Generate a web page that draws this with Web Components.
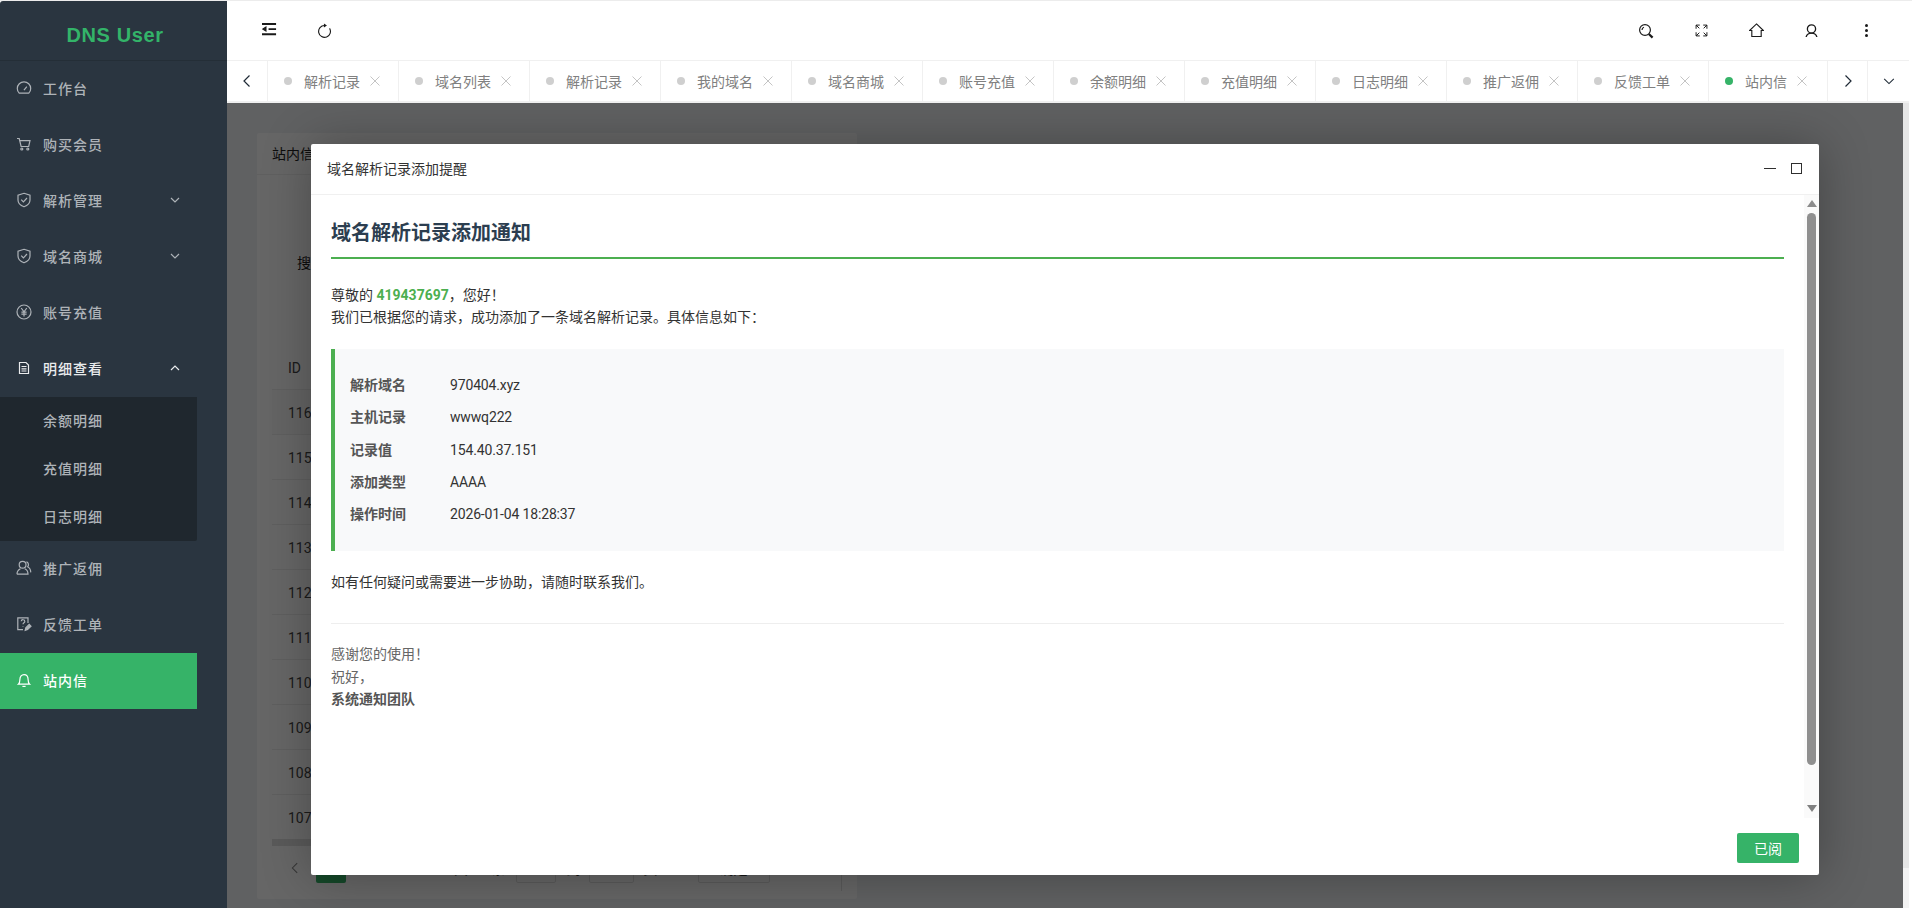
<!doctype html>
<html lang="zh">
<head>
<meta charset="utf-8">
<title>DNS User</title>
<style>
  html, body { margin: 0; height: 100%; background: #fff; overflow: hidden; }
  body { font: 14px Roboto, "Noto Sans CJK SC", sans-serif; color: #333; }
</style>
</head>
<body>
<dns-app>
  <dns-sidebar slot="side" logo="DNS User">
    <side-item icon="gauge" label="工作台"></side-item>
    <side-item icon="cart" label="购买会员"></side-item>
    <side-item icon="shield" label="解析管理" caret="down"></side-item>
    <side-item icon="shield" label="域名商城" caret="down"></side-item>
    <side-item icon="yen" label="账号充值"></side-item>
    <side-item icon="doc" label="明细查看" caret="up" open></side-item>
    <side-group>
      <side-item sub label="余额明细"></side-item>
      <side-item sub label="充值明细"></side-item>
      <side-item sub label="日志明细"></side-item>
    </side-group>
    <side-item icon="users" label="推广返佣"></side-item>
    <side-item icon="ticket" label="反馈工单"></side-item>
    <side-item icon="bell" label="站内信" active></side-item>
  </dns-sidebar>
  <top-bar slot="top"></top-bar>
  <tab-strip slot="top">
    <tab-item label="解析记录"></tab-item>
    <tab-item label="域名列表"></tab-item>
    <tab-item label="解析记录"></tab-item>
    <tab-item label="我的域名"></tab-item>
    <tab-item label="域名商城"></tab-item>
    <tab-item label="账号充值"></tab-item>
    <tab-item label="余额明细"></tab-item>
    <tab-item label="充值明细"></tab-item>
    <tab-item label="日志明细"></tab-item>
    <tab-item label="推广返佣"></tab-item>
    <tab-item label="反馈工单"></tab-item>
    <tab-item label="站内信" active></tab-item>
  </tab-strip>
  <inbox-card></inbox-card>
  <modal-dialog slot="modal" heading="域名解析记录添加提醒" action="已阅">
    <notice-mail></notice-mail>
  </modal-dialog>
</dns-app>

<script>
const sharedStyle = `
:host { box-sizing: border-box; }
* { box-sizing: border-box; }
svg { display: block; }
`;

const icons = {
  gauge: '<path d="M3.2 13.2A6.7 6.7 0 1 1 12.8 13.2Z"/><path d="M8 10.2 10.8 6.6"/>',
  cart: '<path d="M1 2.5h2.2l1.9 8h7.6l1.3-5.8H3.8"/><circle cx="5.8" cy="13" r="1"/><circle cx="11.8" cy="13" r="1"/>',
  shield: '<path d="M8 1.3 14 3.2V8c0 3.4-2.6 5.6-6 6.8C4.6 13.6 2 11.4 2 8V3.2Z"/><path d="M5.2 7.6 7.4 9.8 11 6"/>',
  yen: '<circle cx="8" cy="8" r="7"/><path d="M5.2 4 8 7.8 10.8 4M8 7.8V12.6M5.4 8.2h5.2M5.4 10.2h5.2"/>',
  doc: '<path d="M3.5 2.500h6.500l2.500 2.500v8.500h-9ZM5.500 6.500h5M5.500 8.800h5M5.500 11h5"/>',
  users: '<circle cx="6.6" cy="4.8" r="3.4"/><path d="M1 14.2c0-2.8 1.4-4.4 3.4-5.4M8.8 8.8c2 .9 3.2 2.6 3.2 5.4H1M10.4 1.8c2 .4 2.800 3.400 1.200 5 1.800.8 3 2.600 3.200 5.600"/>',
  ticket: '<path d="M12 7V1.800H1.800V13.600H7"/><path d="M5.200 5.200c.2-2 3.600-2 3.600.2 0 1.400-1.800 1.400-1.800 2.800M7 10v.6"/><path d="M9.200 14.400 9.800 11.800 13.200 8.400 15 10.200 11.600 13.600Z" fill="currentColor"/>',
  bell: '<path d="M2.400 12.200c1.200-1 1.500-2.400 1.500-4.600 0-3 1.800-5 4.100-5s4.100 2 4.100 5c0 2.200.3 3.600 1.500 4.600Z"/><path d="M6.400 14.400h3.200"/>',
  back: '<path d="M10.500 2.500 5 8l5.500 5.500"/>',
  next: '<path d="M5.500 2.500 11 8l-5.500 5.500"/>',
  down: '<path d="M2.500 5.500 8 11l5.500-5.500"/>',
  up: '<path d="M4 10 8 6l4 4"/>',
  caret: '<path d="M4 6 8 10l4-4"/>',
  indent: '<path d="M0 1h15M7 6.500h8M0 12h15" stroke-width="2"/><path d="M1 6.500 4.200 4.400V8.600Z" fill="currentColor"/>',
  refresh: '<path d="M13.400 5.700A6.300 6.300 0 1 1 8 2.700"/><path d="M7.400.5 10.600 2.700 7.400 4.900Z" fill="currentColor" stroke="none"/>',
  search: '<circle cx="7" cy="7" r="5.400"/><path d="M4 7A3 3 0 0 1 6 4.200"/><path d="M10.800 11 14.600 14.600" stroke-width="2.200"/>',
  full: '<path d="M1 4.400V1h3.400M1 1l3 3M11 4.400V1H7.600M11 1 8 4M1 7.600V11h3.400M1 11l3-3M11 7.600V11H7.600M11 11 8 8" stroke-width=".9"/>',
  home: '<path d="M8 1 15.400 8H13v6.400H3V8H.6Z"/>',
  user: '<circle cx="6" cy="4.600" r="3.800"/><path d="M.8 13.600C1 10.600 2.800 8.400 6 8.400s5 2.200 5.200 5.200"/>'
};

function icon(name, size, box = 16) {
  return `<svg width="${size}" height="${size}" viewBox="0 0 ${box} ${box}" fill="none" stroke="currentColor" stroke-width="1.2" aria-hidden="true">${icons[name] || ""}</svg>`;
}

class DnsApp extends HTMLElement {
  constructor() {
    super();
    const root = this.attachShadow({ mode: "open" });
    root.innerHTML = `
      <style>
        ${sharedStyle}
        :host { display: flex; width: 1912px; height: 908px; padding: 1px 3px 0 0; box-shadow: inset 0 1px 0 #ececec; }
        .main { flex: 1; min-width: 0; display: flex; flex-direction: column; }
        .body { flex: 1; min-height: 0; display: flex; }
        .page { position: relative; flex: 1; min-width: 0; padding: 30px; background: #f0f2f5; overflow: hidden; }
        .shade { position: absolute; inset: 0; background: rgba(0, 0, 0, 0.6); }
        .modal { position: absolute; left: 84px; top: 41px; }
        .bar { width: 6px; background: #f3f3f3; }
        .bar i { display: block; height: 765px; background: #e6e6e6; }
      </style>
      <slot name="side"></slot>
      <div class="main">
        <slot name="top"></slot>
        <div class="body">
          <div class="page">
            <slot></slot>
            <div class="shade"></div>
            <div class="modal"><slot name="modal"></slot></div>
          </div>
          <div class="bar"><i></i></div>
        </div>
      </div>
    `;
  }
}

class DnsSidebar extends HTMLElement {
  constructor() {
    super();
    const root = this.attachShadow({ mode: "open" });
    root.innerHTML = `
      <style>
        ${sharedStyle}
        :host { display: block; width: 227px; flex: none; background: #2a3540; border-radius: 3px 0 0 0; }
        .logo { height: 60px; display: flex; align-items: center; justify-content: center; padding: 9px 0 0 3px; border-bottom: 1px solid #242e37; font: bold 20px "Liberation Sans", sans-serif; letter-spacing: .6px; color: #33b469; }
        nav { padding-right: 30px; }
      </style>
      <div class="logo">${this.getAttribute("logo") || ""}</div>
      <nav><slot></slot></nav>
    `;
  }
}

class SideItem extends HTMLElement {
  constructor() {
    super();
    const root = this.attachShadow({ mode: "open" });
    const caret = this.getAttribute("caret");
    root.innerHTML = `
      <style>
        ${sharedStyle}
        :host { display: flex; align-items: center; height: 56px; padding: 0 0 2px 16px; color: #aeb3b8; font-weight: 500; letter-spacing: 1px; }
        :host([open]) { color: #e9ebed; }
        :host([active]) { background: #36b368; color: #fff; }
        :host([sub]) { height: 48px; padding-left: 43px; }
        .ico { width: 27px; flex: none; }
        .label { flex: 1; }
        .caret { margin-right: 14px; flex: none; }
      </style>
      ${this.hasAttribute("sub") ? "" : `<span class="ico">${icon(this.getAttribute("icon"), 16)}</span>`}
      <span class="label">${this.getAttribute("label") || ""}</span>
      ${caret ? `<span class="caret">${icon(caret === "up" ? "up" : "caret", 16)}</span>` : ""}
    `;
  }
}

class SideGroup extends HTMLElement {
  constructor() {
    super();
    const root = this.attachShadow({ mode: "open" });
    root.innerHTML = `
      <style>
        ${sharedStyle}
        :host { display: block; background: #1f272e; border-radius: 0 0 2px 0; }
      </style>
      <slot></slot>
    `;
  }
}

class TopBar extends HTMLElement {
  constructor() {
    super();
    const root = this.attachShadow({ mode: "open" });
    const btn = (html) => `<span class="btn">${html}</span>`;
    root.innerHTML = `
      <style>
        ${sharedStyle}
        :host { display: flex; align-items: center; height: 60px; padding: 0 15.5px 0 15px; background: #fff; border-radius: 0 9px 0 0; color: #1a1a1a; border-bottom: 1px solid #f0f0f0; }
        .btn { width: 55px; height: 60px; display: flex; align-items: center; justify-content: center; }
        .gap { flex: 1; }
        .dots { display: grid; gap: 2px; }
        .dots i { width: 3px; height: 3px; border-radius: 50%; background: #1a1a1a; }
      </style>
      ${btn(icon("indent", 15))}
      ${btn(icon("refresh", 15))}
      <span class="gap"></span>
      ${btn(icon("search", 16))}
      ${btn(icon("full", 13, 12))}
      ${btn(icon("home", 15))}
      ${btn(icon("user", 13, 12))}
      ${btn('<span class="dots"><i></i><i></i><i></i></span>')}
    `;
  }
}

class TabStrip extends HTMLElement {
  constructor() {
    super();
    const root = this.attachShadow({ mode: "open" });
    root.innerHTML = `
      <style>
        ${sharedStyle}
        :host { display: flex; height: 42px; background: #fff; border-bottom: 2px solid #f0f0f0; color: #1f2a36; }
        .nav { width: 41px; display: flex; align-items: center; justify-content: center; border-right: 1px solid #f0f0f0; flex: none; }
        .nav.last { flex: 1; border-right: 0; }
        .list { display: flex; flex: none; }
      </style>
      <span class="nav">${icon("back", 16)}</span>
      <div class="list"><slot></slot></div>
      <span class="nav" style="width:40px">${icon("next", 16)}</span>
      <span class="nav last">${icon("down", 14)}</span>
    `;
  }
}

class TabItem extends HTMLElement {
  constructor() {
    super();
    const root = this.attachShadow({ mode: "open" });
    root.innerHTML = `
      <style>
        ${sharedStyle}
        :host { display: flex; align-items: center; padding: 0 18px 1px 16px; border-right: 1px solid #f0f0f0; color: #808080; }
        :host([active]) { padding-right: 20px; }
        .dot { width: 8px; height: 8px; border-radius: 50%; background: #cfcfcf; margin-right: 12px; }
        :host([active]) .dot { background: #36b368; }
        .x { margin-left: 10px; color: #c4c4c4; }
      </style>
      <span class="dot"></span>
      <span>${this.getAttribute("label") || ""}</span>
      <span class="x"><svg width="10" height="10" viewBox="0 0 10 10" stroke="currentColor" stroke-width="1"><path d="M.5.5l9 9M9.500.5l-9 9"/></svg></span>
    `;
  }
}

class InboxCard extends HTMLElement {
  constructor() {
    super();
    const root = this.attachShadow({ mode: "open" });
    const ids = [116, 115, 114, 113, 112, 111, 110, 109, 108, 107];
    root.innerHTML = `
      <style>
        ${sharedStyle}
        :host { display: block; width: 600px; height: 766px; background: #fff; border-radius: 2px; color: #222; }
        .head { height: 42px; padding: 0 15px 1px; display: flex; align-items: center; border-bottom: 1px solid #f0f0f0; }
        .body { padding: 15px; }
        .search { height: 155px; padding: 0 0 11px 25px; display: flex; align-items: center; gap: 8px; }
        .row { height: 45px; padding: 2px 16px 0; display: flex; align-items: center; border-bottom: 1px solid #eee; color: #444; }
        .row.hover { background: #fbfbfb; }
        .hbar { height: 7px; margin-top: -1px; background: #e0e0e0; }
        .pager { height: 31px; margin-top: 6px; display: flex; align-items: center; color: #333; }
        .pager .prev { margin-left: 16px; color: #888; }
        .pager .cur { width: 30px; height: 31px; margin-left: 14px; background: #36b368; color: #fff; border-radius: 2px; display: flex; align-items: center; justify-content: center; }
        .pager .txt { margin-left: 108px; }
        .box { height: 30px; display: flex; align-items: center; justify-content: center; border: 1px solid #e2e2e2; border-radius: 2px; }
        .rule { width: 1px; height: 46px; margin-left: auto; background: #e2e2e2; }
      </style>
      <div class="head">站内信</div>
      <div class="body">
        <div class="search"><span>搜索</span></div>
        <div class="row">ID</div>
        ${ids.map((id, i) => `<div class="row${i === 0 ? " hover" : ""}">${id}</div>`).join("")}
        <div class="hbar"></div>
        <div class="pager">
          <span class="prev">${icon("back", 14)}</span>
          <span class="cur">1</span>
          <span class="txt">共116条</span>
          <span class="box" style="width:40px;margin-left:10px"></span>
          <span style="margin-left:11px">到</span>
          <span class="box" style="width:45px;margin-left:8px">10</span>
          <span style="margin-left:10px">页</span>
          <span class="box" style="width:72px;margin-left:40px">确定</span>
          <span class="rule"></span>
        </div>
      </div>
    `;
  }
}

class ModalDialog extends HTMLElement {
  constructor() {
    super();
    const root = this.attachShadow({ mode: "open" });
    root.innerHTML = `
      <style>
        ${sharedStyle}
        :host { display: flex; flex-direction: column; width: 1508px; height: 731px; background: #fff; border-radius: 2px; box-shadow: 1px 1px 50px rgba(0, 0, 0, 0.3); }
        .head { height: 51px; flex: none; display: flex; align-items: center; padding: 0 17px 2px 16px; border-bottom: 1px solid #f0f0f0; color: #333; }
        .head .title { flex: 1; }
        .min { width: 12px; height: 1px; background: #2f2f2f; margin-right: 15px; }
        .max { width: 11px; height: 11px; border: 1px solid #2f2f2f; }
        .mid { height: 623px; flex: none; display: flex; min-height: 0; }
        .content { flex: 1; min-width: 0; overflow: hidden; }
        .scroll { width: 15px; flex: none; background: #fafafa; display: flex; flex-direction: column; align-items: center; }
        .tri { width: 0; height: 0; border-left: 5px solid transparent; border-right: 5px solid transparent; }
        .tri.a { border-bottom: 7px solid #8c8c8c; margin-top: 5px; }
        .tri.b { border-top: 7px solid #808080; margin-top: 40px; }
        .thumb { width: 9px; height: 552px; margin-top: 6px; border-radius: 5px; background: #8f8f8f; }
        .foot { flex: 1; display: flex; justify-content: flex-end; padding: 15px 20px 0 0; }
        button { width: 62px; height: 30px; border: 0; border-radius: 2px; background: #36b368; color: #fff; font: inherit; padding: 0; }
      </style>
      <div class="head"><span class="title">${this.getAttribute("heading") || ""}</span><span class="min"></span><span class="max"></span></div>
      <div class="mid">
        <div class="content"><slot></slot></div>
        <div class="scroll"><i class="tri a"></i><i class="thumb"></i><i class="tri b"></i></div>
      </div>
      <div class="foot"><button type="button">${this.getAttribute("action") || ""}</button></div>
    `;
  }
}

class NoticeMail extends HTMLElement {
  constructor() {
    super();
    const root = this.attachShadow({ mode: "open" });
    const rows = [
      ["解析域名", "970404.xyz"],
      ["主机记录", "wwwq222"],
      ["记录值", "154.40.37.151"],
      ["添加类型", "AAAA"],
      ["操作时间", "2026-01-04 18:28:37"]
    ];
    root.innerHTML = `
      <style>
        ${sharedStyle}
        :host { display: block; padding: 24px 20px 0; color: #333; line-height: 22.4px; }
        h2 { margin: 0 0 25px; padding-bottom: 10px; border-bottom: 2px solid #4caf50; font-size: 20px; line-height: 28px; font-weight: 700; color: #2c3e50; }
        p { margin: 0; }
        b.id { color: #4caf50; }
        .info { margin: 20px 0; padding: 20px 15px; background: #f8f9fa; border-left: 4px solid #4caf50; }
        .line { display: grid; grid-template-columns: 100px 1fr; height: 32.4px; align-items: center; }
        .line span:first-child { color: #555; font-weight: 700; }
        .line span:last-child { letter-spacing: -0.15px; }
        .foot { margin-top: 30px; padding-top: 19px; border-top: 1px solid #eee; color: #666; }
        .foot b { color: #555; }
      </style>
      <h2>域名解析记录添加通知</h2>
      <p>尊敬的 <b class="id">419437697</b>，您好！</p>
      <p>我们已根据您的请求，成功添加了一条域名解析记录。具体信息如下：</p>
      <div class="info">
        ${rows.map(([k, v]) => `<div class="line"><span>${k}</span><span>${v}</span></div>`).join("")}
      </div>
      <p>如有任何疑问或需要进一步协助，请随时联系我们。</p>
      <div class="foot">
        <p>感谢您的使用！</p>
        <p>祝好，</p>
        <p><b>系统通知团队</b></p>
      </div>
    `;
  }
}

customElements.define("dns-app", DnsApp);
customElements.define("dns-sidebar", DnsSidebar);
customElements.define("side-item", SideItem);
customElements.define("side-group", SideGroup);
customElements.define("top-bar", TopBar);
customElements.define("tab-strip", TabStrip);
customElements.define("tab-item", TabItem);
customElements.define("inbox-card", InboxCard);
customElements.define("modal-dialog", ModalDialog);
customElements.define("notice-mail", NoticeMail);
</script>
</body>
</html>
